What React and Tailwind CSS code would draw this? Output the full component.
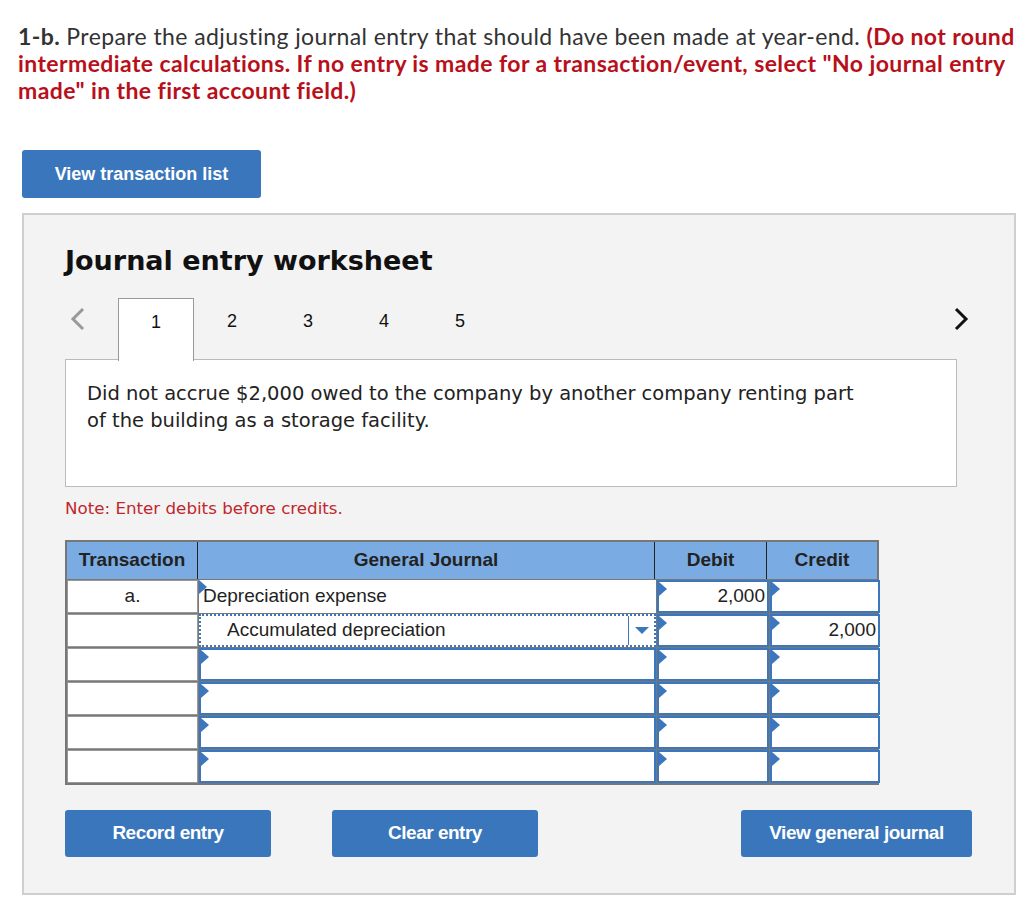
import React from "react";

const Flag = () => (
  <span className="absolute left-0 top-0 w-0 h-0 border-t-[7px] border-b-[7px] border-l-[8px] border-t-transparent border-b-transparent border-l-[#3c77bd]" />
);

const InputCell = ({ value }) => (
  <div className="relative h-[33px] bg-white border-2 border-[#3c77bd]">
    <Flag />
    {value && (
      <div className="h-full flex items-center justify-end pr-[2px] text-[19px] text-[#222]">
        {value}
      </div>
    )}
  </div>
);

const TxCell = ({ value }) => (
  <div className="h-[33px] bg-white border border-[#999] flex items-center justify-center text-[19px] text-[#222]">
    {value}
  </div>
);

const Btn = ({ children, className = "" }) => (
  <button className={`h-[47px] rounded-[3px] bg-[#3a76bb] text-white font-bold ${className}`}>
    {children}
  </button>
);

export default function App() {
  const rows = [
    { tx: "a.", acct: "Depreciation expense", debit: "2,000", credit: "" },
    { tx: "", acct: "Accumulated depreciation", debit: "", credit: "2,000" },
    { tx: "", acct: "", debit: "", credit: "" },
    { tx: "", acct: "", debit: "", credit: "" },
    { tx: "", acct: "", debit: "", credit: "" },
    { tx: "", acct: "", debit: "", credit: "" },
  ];

  return (
    <div className="w-[1024px] h-[902px] bg-white overflow-hidden" style={{ fontFamily: "'Liberation Sans', Arial, sans-serif" }}>
      <div className="pl-[18px] pt-[23px] text-[23px] leading-[27px] tracking-[0.4px] text-[#333] whitespace-nowrap" style={{ fontFamily: "Lato, 'Open Sans', sans-serif" }}>
        <div>
          <span className="font-bold">1-b.</span> Prepare the adjusting journal entry that should have been made at year-end.{" "}
          <span className="font-bold text-[#b8101a]">(Do not round</span>
        </div>
        <div className="font-bold text-[#b8101a]">
          intermediate calculations. If no entry is made for a transaction/event, select "No journal entry
        </div>
        <div className="font-bold text-[#b8101a]">made" in the first account field.)</div>
      </div>

      <div className="pl-[22px] mt-[46px]">
        <Btn className="w-[239px] h-[48px] text-[18px]">View transaction list</Btn>
      </div>

      <div className="ml-[22px] w-[994px] mt-[15px] h-[682px] bg-[#f3f3f3] border-2 border-[#cfcfcf] pl-[41px] pr-[57px]">
        <h2 className="mt-[28px] text-[27px] font-bold text-[#111] leading-[36px]" style={{ fontFamily: "'DejaVu Sans', Verdana, sans-serif" }}>
          Journal entry worksheet
        </h2>

        <div className="mt-[19px] flex h-[62px] relative">
          <div className="w-[53px] h-full flex items-start pt-[9px] pl-[4px]">
            <svg width="18" height="24" viewBox="0 0 18 24">
              <path d="M14 2 L4 12 L14 22" fill="none" stroke="#999" strokeWidth="3" />
            </svg>
          </div>
          <div className="w-[76px] h-[63px] bg-white border border-b-0 border-[#999] flex items-start pt-[10px] justify-center text-[18px] text-[#111] relative z-10">
            1
          </div>
          {["2", "3", "4", "5"].map((n) => (
            <div key={n} className="w-[76px] h-full flex items-start pt-[10px] justify-center text-[18px] text-[#111]">
              {n}
            </div>
          ))}
          <div className="flex-1 h-full flex items-start pt-[9px] justify-end -mr-[13px]">
            <svg width="18" height="24" viewBox="0 0 18 24">
              <path d="M4 2 L14 12 L4 22" fill="none" stroke="#111" strokeWidth="3" />
            </svg>
          </div>
        </div>

        <div className="-mt-px h-[128px] bg-white border border-[#bbb] pl-[21px] pt-[20px] text-[19.5px] leading-[27px] text-[#222]" style={{ fontFamily: "'DejaVu Sans', Verdana, sans-serif" }}>
          Did not accrue $2,000 owed to the company by another company renting part
          <br />
          of the building as a storage facility.
        </div>

        <div className="mt-[9px] text-[16.7px] text-[#c0272d]" style={{ fontFamily: "'DejaVu Sans', Verdana, sans-serif" }}>
          Note: Enter debits before credits.
        </div>

        <div className="mt-[19px] w-[814px] border-2 border-[#777] bg-[#777]">
          <div className="grid grid-cols-[131px_457px_112px_110px] bg-[#7aabe3] h-[37px] text-[19px] font-bold text-[#222]">
            <div className="flex items-center justify-center border-r border-[#222]">Transaction</div>
            <div className="flex items-center justify-center border-r border-[#222]">General Journal</div>
            <div className="flex items-center justify-center border-r border-[#222]">Debit</div>
            <div className="flex items-center justify-center">Credit</div>
          </div>
          {rows.map((r, i) => (
            <div key={i} className="grid grid-cols-[131px_457px_112px_110px] gap-px mt-px">
              <TxCell value={r.tx} />
              {i === 1 ? (
                <div className="relative h-[33px] bg-white border-2 border-dotted border-[#3c77bd] flex items-center">
                  <div className="flex-1 pl-[26px] text-[19px] text-[#222]">{r.acct}</div>
                  <div className="w-[26px] h-full border-l border-[#3c77bd] flex items-center justify-center">
                    <span className="w-0 h-0 border-l-[7px] border-r-[7px] border-t-[7px] border-l-transparent border-r-transparent border-t-[#3c77bd]" />
                  </div>
                </div>
              ) : i === 0 ? (
                <div className="relative h-[33px] bg-white flex items-center">
                  <Flag />
                  <div className="pl-[4px] text-[19px] text-[#222]">{r.acct}</div>
                </div>
              ) : (
                <InputCell />
              )}
              <InputCell value={r.debit} />
              <InputCell value={r.credit} />
            </div>
          ))}
        </div>

        <div className="mt-[25px] flex w-[907px]">
          <Btn className="w-[206px] text-[19px] tracking-[-0.5px]">Record entry</Btn>
          <Btn className="w-[206px] ml-[61px] text-[19px] tracking-[-0.5px]">Clear entry</Btn>
          <Btn className="w-[231px] ml-auto text-[19px] tracking-[-0.5px]">View general journal</Btn>
        </div>
      </div>
    </div>
  );
}
